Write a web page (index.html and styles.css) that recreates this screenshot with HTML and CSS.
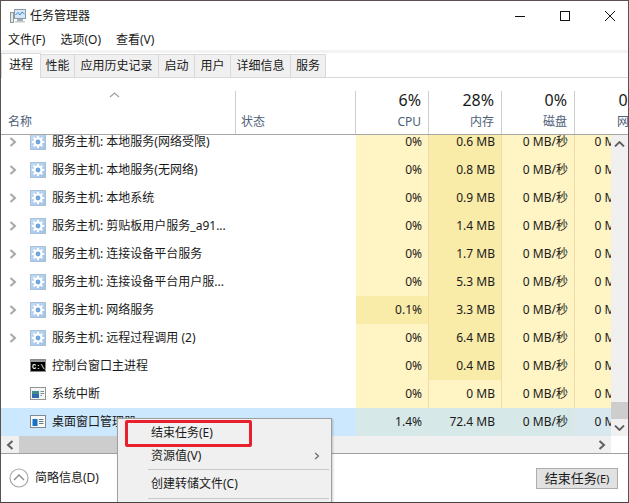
FILE: index.html
```html
<!DOCTYPE html>
<html lang="zh">
<head>
<meta charset="utf-8">
<title>任务管理器</title>
<link rel="stylesheet" href="styles.css">
</head>
<body>
<svg width="0" height="0" class="defs">
  <defs>
    <linearGradient id="gearbg" x1="0" y1="0" x2="1" y2="1"><stop offset="0" stop-color="#c6dcf4"/><stop offset="1" stop-color="#9cc1ea"/></linearGradient>
    <symbol id="gear" viewBox="0 0 16 16">
      <rect x=".5" y=".5" width="15" height="15" fill="url(#gearbg)" stroke="#a9c0da"/>
      <g fill="#fff"><circle cx="8" cy="8" r="4.6"/>
        <rect x="7" y="1.8" width="2" height="12.4"/><rect x="1.8" y="7" width="12.4" height="2"/>
        <rect x="7" y="1.8" width="2" height="12.4" transform="rotate(45 8 8)"/><rect x="7" y="1.8" width="2" height="12.4" transform="rotate(-45 8 8)"/></g>
      <circle cx="8" cy="8" r="2.4" fill="#6fa6e0"/>
    </symbol>
    <symbol id="chev" viewBox="0 0 8 10"><path d="M1.5 1 L6 5 L1.5 9" fill="none" stroke="#a6a6a6" stroke-width="2"/></symbol>
    <symbol id="chevd" viewBox="0 0 8 10"><path d="M1.5 1 L6 5 L1.5 9" fill="none" stroke="#606060" stroke-width="2"/></symbol>
  </defs>
</svg>
<div class="window">
  <header class="titlebar">
    <svg class="appicon" width="16" height="16" viewBox="0 0 16 16">
      <rect x="4.5" y="1.5" width="11" height="9" fill="#d6e8f6" stroke="#8a9aa6"/>
      <path d="M5.5 7 L8 4.5 L10 7 L12 4 L14.500 6" fill="none" stroke="#3d8fcb"/>
      <rect x="7" y="11" width="6" height="2" fill="#a8b0b6"/>
      <rect x="5" y="13" width="10" height="1.500" fill="#c4cace"/>
      <rect x="0.500" y="4.500" width="3" height="10" fill="#e4e8e8" stroke="#8f9a98"/>
    </svg>
    <span class="wintitle">任务管理器</span>
    <div class="winbtns">
      <svg width="12" height="12" viewBox="0 0 12 12"><path d="M1 6.500H11" stroke="#111"/></svg>
      <svg width="12" height="12" viewBox="0 0 12 12"><rect x="1.500" y="1.500" width="9" height="9" fill="none" stroke="#111"/></svg>
      <svg width="12" height="12" viewBox="0 0 12 12"><path d="M1 1L11 11M11 1L1 11" stroke="#111" fill="none"/></svg>
    </div>
  </header>
  <nav class="menubar"><span>文件(F)</span><span>选项(O)</span><span>查看(V)</span></nav>
  <div class="tabs">
    <span class="tab active">进程</span><span class="tab">性能</span><span class="tab">应用历史记录</span><span class="tab">启动</span><span class="tab">用户</span><span class="tab">详细信息</span><span class="tab">服务</span>
  </div>
  <div class="thead">
    <div class="th th-name"><svg class="sort" width="11" height="6" viewBox="0 0 11 6"><path d="M1 5L5.500 1L10 5" fill="none" stroke="#a0a0a0" stroke-width="1.300"/></svg><span class="lbl">名称</span></div>
    <div class="th th-status"><span class="lbl">状态</span></div>
    <div class="th num"><span class="pct">6%</span><span class="lbl">CPU</span></div>
    <div class="th num"><span class="pct">28%</span><span class="lbl">内存</span></div>
    <div class="th num"><span class="pct">0%</span><span class="lbl">磁盘</span></div>
    <div class="th num last"><span class="pct">0%</span><span class="lbl">网络</span></div>
  </div>
  <div class="body">
    <div class="content">
      <div class="rows">
        <div class="row first"><div class="c name"><svg class="chev"><use href="#chev"/></svg><svg class="ic"><use href="#gear"/></svg><span>服务主机: 本地服务(网络受限)</span></div><div class="c st"></div><div class="c v">0%</div><div class="c v hot">0.6 MB</div><div class="c v">0 MB/秒</div><div class="c v n">0 Mbps</div></div>
        <div class="row"><div class="c name"><svg class="chev"><use href="#chev"/></svg><svg class="ic"><use href="#gear"/></svg><span>服务主机: 本地服务(无网络)</span></div><div class="c st"></div><div class="c v">0%</div><div class="c v hot">0.8 MB</div><div class="c v">0 MB/秒</div><div class="c v n">0 Mbps</div></div>
        <div class="row"><div class="c name"><svg class="chev"><use href="#chev"/></svg><svg class="ic"><use href="#gear"/></svg><span>服务主机: 本地系统</span></div><div class="c st"></div><div class="c v">0%</div><div class="c v hot">0.9 MB</div><div class="c v">0 MB/秒</div><div class="c v n">0 Mbps</div></div>
        <div class="row"><div class="c name"><svg class="chev"><use href="#chev"/></svg><svg class="ic"><use href="#gear"/></svg><span>服务主机: 剪贴板用户服务_a91...</span></div><div class="c st"></div><div class="c v">0%</div><div class="c v hot">1.4 MB</div><div class="c v">0 MB/秒</div><div class="c v n">0 Mbps</div></div>
        <div class="row"><div class="c name"><svg class="chev"><use href="#chev"/></svg><svg class="ic"><use href="#gear"/></svg><span>服务主机: 连接设备平台服务</span></div><div class="c st"></div><div class="c v">0%</div><div class="c v hot">1.7 MB</div><div class="c v">0 MB/秒</div><div class="c v n">0 Mbps</div></div>
        <div class="row"><div class="c name"><svg class="chev"><use href="#chev"/></svg><svg class="ic"><use href="#gear"/></svg><span>服务主机: 连接设备平台用户服...</span></div><div class="c st"></div><div class="c v">0%</div><div class="c v hot">5.3 MB</div><div class="c v">0 MB/秒</div><div class="c v n">0 Mbps</div></div>
        <div class="row"><div class="c name"><svg class="chev"><use href="#chev"/></svg><svg class="ic"><use href="#gear"/></svg><span>服务主机: 网络服务</span></div><div class="c st"></div><div class="c v hot">0.1%</div><div class="c v hot">3.3 MB</div><div class="c v">0 MB/秒</div><div class="c v n">0 Mbps</div></div>
        <div class="row"><div class="c name"><svg class="chev"><use href="#chev"/></svg><svg class="ic"><use href="#gear"/></svg><span>服务主机: 远程过程调用 (2)</span></div><div class="c st"></div><div class="c v">0%</div><div class="c v hot">6.4 MB</div><div class="c v">0 MB/秒</div><div class="c v n">0 Mbps</div></div>
        <div class="row"><div class="c name"><span class="nochev"></span><svg class="ic" viewBox="0 0 16 16"><rect x=".5" y="1.500" width="15" height="12" fill="#000" stroke="#8a8a8a"/><rect x="1" y="2" width="14" height="2" fill="#9a9a9a"/><text x="2" y="11" class="cmdtxt">C:\_</text></svg><span>控制台窗口主进程</span></div><div class="c st"></div><div class="c v">0%</div><div class="c v hot">0.4 MB</div><div class="c v">0 MB/秒</div><div class="c v n">0 Mbps</div></div>
        <div class="row"><div class="c name"><span class="nochev"></span><svg class="ic" viewBox="0 0 16 16"><rect x=".5" y="1.500" width="15" height="12" fill="#f4f6f6" stroke="#8f9694"/><rect x="2" y="5" width="7" height="7" fill="#3f8d8c"/><rect x="2" y="8" width="7" height="4" fill="#2f69b0"/><path d="M10.500 5.500H14M10.500 7.500H14M10.500 9.500H12" stroke="#7f8a8a"/></svg><span>系统中断</span></div><div class="c st"></div><div class="c v">0%</div><div class="c v">0 MB</div><div class="c v">0 MB/秒</div><div class="c v n">0 Mbps</div></div>
        <div class="row sel"><div class="c name"><span class="nochev"></span><svg class="ic" viewBox="0 0 16 16"><rect x=".5" y="1.500" width="15" height="12" fill="#f8fafa" stroke="#7f8a90"/><rect x="2.500" y="5" width="5" height="7" fill="#1673c8"/><path d="M9 5.500H13.500M9 7.500H13.500M9 9.500H13.500" stroke="#6a7a84"/></svg><span>桌面窗口管理器</span></div><div class="c st"></div><div class="c v">1.4%</div><div class="c v">72.4 MB</div><div class="c v">0 MB/秒</div><div class="c v n">0 Mbps</div></div>
      </div>
      <div class="hscroll">
        <button class="sb"><svg width="8" height="10"><use href="#chevd" class="flip"/></svg></button>
        <div class="hthumb"></div>
        <button class="sb end"><svg width="8" height="10"><use href="#chevd"/></svg></button>
      </div>
    </div>
    <div class="vscroll">
      <div class="sbv"><svg width="11" height="6" viewBox="0 0 11 6"><path d="M1 5.500L5.500 1L10 5.500" fill="none" stroke="#606060" stroke-width="1.800"/></svg></div>
      <div class="vtrack"><div class="vthumb"></div></div>
      <div class="sbv"><svg width="11" height="6" viewBox="0 0 11 6"><path d="M1 .5L5.500 5L10 .5" fill="none" stroke="#606060" stroke-width="1.800"/></svg></div>
      <div class="corner"></div>
    </div>
  </div>
  <footer class="footer">
    <svg class="collapse" width="20" height="20" viewBox="0 0 20 20"><circle cx="10" cy="10" r="9" fill="#fff" stroke="#a8a8a8" stroke-width="1.200"/><path d="M5 12L10 7L15 12" fill="none" stroke="#8a8a8a" stroke-width="1.400"/></svg>
    <span class="brief">简略信息(D)</span>
    <button class="endbtn">结束任务<small>(E)</small></button>
  </footer>
  <div class="ctx">
    <div class="mi first">结束任务(E)</div>
    <div class="mi sub">资源值(V)<svg width="6" height="10" viewBox="0 0 8 10"><path d="M1.500 1L6 5L1.500 9" fill="none" stroke="#666" stroke-width="1.500"/></svg></div>
    <div class="sep"></div>
    <div class="mi tall">创建转储文件(C)</div>
    <div class="sep last"></div>
  </div>
  <div class="redbox"></div>
</div>
</body>
</html>
```
FILE: styles.css
```css
* { box-sizing: border-box; }
html, body { margin: 0; padding: 0; }
body { width: 629px; height: 503px; overflow: hidden; background: #fff; color: #1a1a1a;
  font: 12px/16px "Noto Sans", "Noto Sans CJK SC", sans-serif; }
.defs { position: absolute; }
.window { position: relative; width: 629px; height: 503px; border: 1px solid #5b5250; border-bottom-color: #4a4240; display: flex; flex-direction: column; overflow: hidden; background: #fff; }

.titlebar { height: 29px; flex: none; display: flex; align-items: center; padding-left: 9px; }
.appicon { margin-right: 4px; }
.wintitle { font-size: 12px; }
.winbtns { margin-left: auto; display: flex; gap: 33px; padding-right: 12px; align-items: center; }
.winbtns svg { display: block; }

.menubar { height: 20px; flex: none; display: flex; gap: 15px; padding-left: 7px; align-items: center; }
.tabs { height: 28px; flex: none; display: grid; grid-template-columns: 40px 34px 84px 36px 36px 60px 35px; justify-content: start; align-items: end; border-top: 3px solid #f3f3f3; border-bottom: 1px solid #d9d9d9; background: #fff; }
.tab { height: 23px; text-align: center; background: #f0f0f0; border: 1px solid #d9d9d9; border-left: 0; border-bottom: 0; line-height: 22px; white-space: nowrap; }
.tab.active { height: 25px; background: #fff; border-left: 1px solid #d9d9d9; margin-bottom: -1px; position: relative; }

.thead { height: 57px; flex: none; display: grid; grid-template-columns: 235px 120px 73px 73px 73px 73px; overflow: hidden; border-bottom: 1px solid #a6a6a6; padding-top: 13px; }
.th { height: 43px; border-right: 1px solid #cfcfcf; position: relative; display: flex; flex-direction: column; justify-content: flex-end; padding: 0 7px 4px 7px; }
.th.last { border-right: 0; }
.th-status { padding-left: 5px; }
.th .lbl { color: #4e6078; line-height: 16px; white-space: nowrap; }
.th.num { align-items: flex-end; }
.th .pct { font-size: 16px; line-height: 22px; margin-bottom: 3px; color: #1a1a1a; white-space: nowrap; }
.sort { position: absolute; left: 108px; top: 1px; }

.body { height: 318px; flex: none; display: flex; overflow: hidden; }
.content { width: 610px; flex: none; display: flex; flex-direction: column; }
.rows { height: 301px; flex: none; overflow: hidden; }
.row { display: grid; grid-template-columns: 235px 120px 73px 73px 73px 73px; height: 28px; width: 647px; }
.row.first { margin-top: -7px; }
.c { display: flex; align-items: center; white-space: nowrap; }
.name { padding-left: 8px; }
.chev { width: 8px; height: 10px; margin-right: 13px; flex: none; }
.nochev { width: 21px; flex: none; }
.ic { width: 16px; height: 16px; margin-right: 6px; flex: none; }
.cmdtxt { font: bold 7px "Liberation Mono", monospace; fill: #fff; }
.st { background: #fff; }
.v { justify-content: flex-end; background: #fff4c4; padding-right: 7px; box-shadow: inset -1px 0 0 #f0dca8; }
.v.hot { background: #f9eba8; }
.v.n { box-shadow: none; padding-right: 12px; }
.row.sel { background: #cce8ff; }
.row.sel .st { background: #cce8ff; }
.row.sel .v { background: #d6e8e8; box-shadow: inset -1px 0 0 #e0e6e6; }
.row.sel .v.n { background: #d8e8ee; box-shadow: none; }

.hscroll { height: 17px; flex: none; display: flex; background: #f0f0f0; }
.sb { width: 18px; height: 17px; padding: 0; border: 0; background: #f0f0f0; display: flex; align-items: center; justify-content: center; }
.sb.end { margin-left: auto; }
.flip { transform: translate(8px, 0) scaleX(-1); }
.sb svg { display: block; }
.hthumb { width: 180px; background: #cdcdcd; }

.vscroll { width: 17px; flex: none; display: flex; flex-direction: column; }
.sbv { height: 17px; background: #f0f0f0; display: flex; align-items: center; justify-content: center; flex: none; }
.vtrack { flex: 1; background: #f0f0f0; display: flex; align-items: flex-end; }
.vthumb { width: 100%; height: 17px; background: #cdcdcd; }
.corner { height: 17px; background: #fff; flex: none; }

.footer { flex: 1; border-top: 1px solid #a0a0a0; display: flex; align-items: center; padding: 0 10px 0 8px; }
.collapse { margin-right: 6px; flex: none; }
.endbtn { margin-left: auto; width: 82px; height: 21px; padding: 0; background: #e1e1e1; border: 1px solid #adadad; font: 13px/18px "Noto Sans", "Noto Sans CJK SC", sans-serif; color: #1a1a1a; }
.endbtn small { font-size: 11px; }

.ctx { position: absolute; left: 116px; top: 417px; width: 215px; height: 90px; background: #f0f0f0; border: 1px solid #a0a0a0; padding: 0 2px 0 30px; box-shadow: 1px 1px 2px rgba(0,0,0,.2); }
.mi { line-height: 22px; padding-left: 3px; white-space: nowrap; display: flex; justify-content: space-between; align-items: center; }
.mi.first { height: 26px; padding-top: 2px; }
.mi.sub { padding-right: 9px; height: 21px; }
.mi.tall { height: 28px; }
.sep { height: 1px; background: #c8c8c8; margin-top: 3px; }
.sep.last { margin-top: 0; }
.redbox { position: absolute; left: 124px; top: 419px; width: 127px; height: 27px; border: 3px solid #e8202e; border-radius: 2px; }
```
